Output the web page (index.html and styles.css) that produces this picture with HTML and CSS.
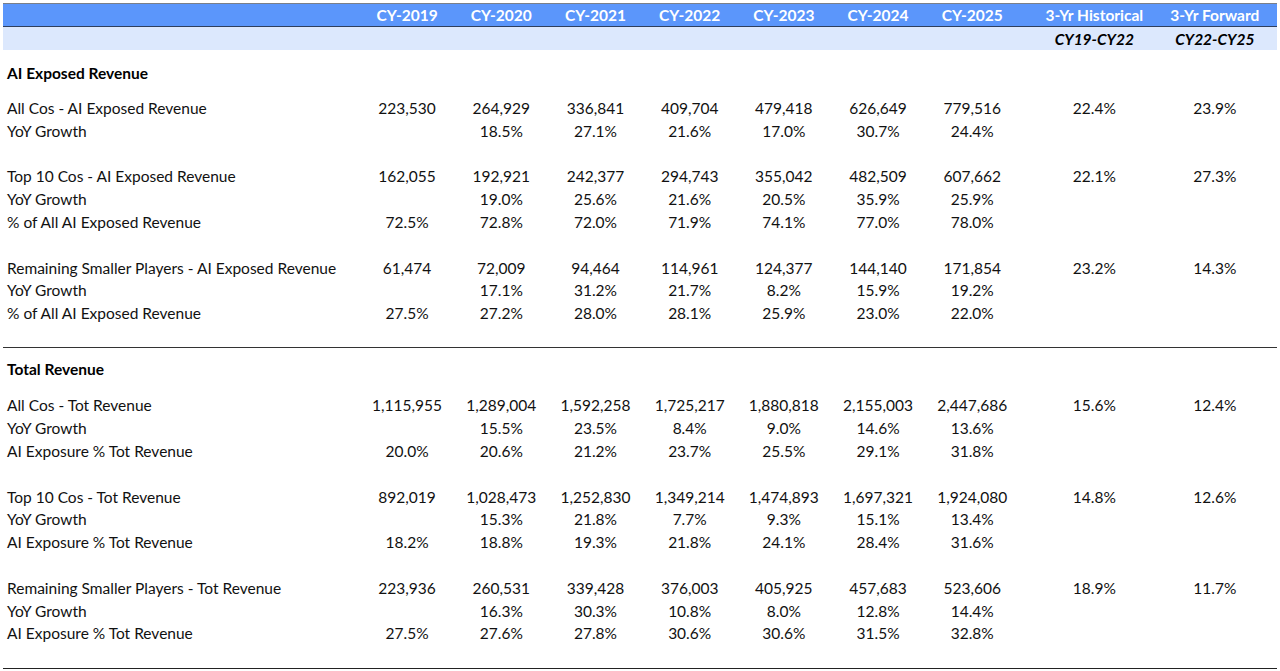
FILE: index.html
```html
<!DOCTYPE html>
<html>
<head>
<meta charset="utf-8">
<link rel="stylesheet" href="styles.css">
</head>
<body>
<div class="sheet">
  <div class="row head1">
    <div class="lbl"></div>
    <div>CY-2019</div><div>CY-2020</div><div>CY-2021</div><div>CY-2022</div><div>CY-2023</div><div>CY-2024</div><div>CY-2025</div>
    <div>3-Yr Historical</div><div>3-Yr Forward</div><div></div>
  </div>
  <div class="row head2">
    <div class="lbl"></div>
    <div></div><div></div><div></div><div></div><div></div><div></div><div></div>
    <div>CY19-CY22</div><div>CY22-CY25</div><div></div>
  </div>

  <div class="section">
    <div class="title">AI Exposed Revenue</div>
    <div class="row"><div class="lbl">All Cos - AI Exposed Revenue</div><div>223,530</div><div>264,929</div><div>336,841</div><div>409,704</div><div>479,418</div><div>626,649</div><div>779,516</div><div>22.4%</div><div>23.9%</div><div></div></div>
    <div class="row"><div class="lbl">YoY Growth</div><div></div><div>18.5%</div><div>27.1%</div><div>21.6%</div><div>17.0%</div><div>30.7%</div><div>24.4%</div><div></div><div></div><div></div></div>
    <div class="row blank"></div>
    <div class="row"><div class="lbl">Top 10 Cos - AI Exposed Revenue</div><div>162,055</div><div>192,921</div><div>242,377</div><div>294,743</div><div>355,042</div><div>482,509</div><div>607,662</div><div>22.1%</div><div>27.3%</div><div></div></div>
    <div class="row"><div class="lbl">YoY Growth</div><div></div><div>19.0%</div><div>25.6%</div><div>21.6%</div><div>20.5%</div><div>35.9%</div><div>25.9%</div><div></div><div></div><div></div></div>
    <div class="row"><div class="lbl">% of All AI Exposed Revenue</div><div>72.5%</div><div>72.8%</div><div>72.0%</div><div>71.9%</div><div>74.1%</div><div>77.0%</div><div>78.0%</div><div></div><div></div><div></div></div>
    <div class="row blank"></div>
    <div class="row"><div class="lbl">Remaining Smaller Players - AI Exposed Revenue</div><div>61,474</div><div>72,009</div><div>94,464</div><div>114,961</div><div>124,377</div><div>144,140</div><div>171,854</div><div>23.2%</div><div>14.3%</div><div></div></div>
    <div class="row"><div class="lbl">YoY Growth</div><div></div><div>17.1%</div><div>31.2%</div><div>21.7%</div><div>8.2%</div><div>15.9%</div><div>19.2%</div><div></div><div></div><div></div></div>
    <div class="row"><div class="lbl">% of All AI Exposed Revenue</div><div>27.5%</div><div>27.2%</div><div>28.0%</div><div>28.1%</div><div>25.9%</div><div>23.0%</div><div>22.0%</div><div></div><div></div><div></div></div>
    <div class="row blank"></div>
  </div>

  <div class="section ruled">
    <div class="title">Total Revenue</div>
    <div class="row"><div class="lbl">All Cos - Tot Revenue</div><div>1,115,955</div><div>1,289,004</div><div>1,592,258</div><div>1,725,217</div><div>1,880,818</div><div>2,155,003</div><div>2,447,686</div><div>15.6%</div><div>12.4%</div><div></div></div>
    <div class="row"><div class="lbl">YoY Growth</div><div></div><div>15.5%</div><div>23.5%</div><div>8.4%</div><div>9.0%</div><div>14.6%</div><div>13.6%</div><div></div><div></div><div></div></div>
    <div class="row"><div class="lbl">AI Exposure % Tot Revenue</div><div>20.0%</div><div>20.6%</div><div>21.2%</div><div>23.7%</div><div>25.5%</div><div>29.1%</div><div>31.8%</div><div></div><div></div><div></div></div>
    <div class="row blank"></div>
    <div class="row"><div class="lbl">Top 10 Cos - Tot Revenue</div><div>892,019</div><div>1,028,473</div><div>1,252,830</div><div>1,349,214</div><div>1,474,893</div><div>1,697,321</div><div>1,924,080</div><div>14.8%</div><div>12.6%</div><div></div></div>
    <div class="row"><div class="lbl">YoY Growth</div><div></div><div>15.3%</div><div>21.8%</div><div>7.7%</div><div>9.3%</div><div>15.1%</div><div>13.4%</div><div></div><div></div><div></div></div>
    <div class="row"><div class="lbl">AI Exposure % Tot Revenue</div><div>18.2%</div><div>18.8%</div><div>19.3%</div><div>21.8%</div><div>24.1%</div><div>28.4%</div><div>31.6%</div><div></div><div></div><div></div></div>
    <div class="row blank"></div>
    <div class="row"><div class="lbl">Remaining Smaller Players - Tot Revenue</div><div>223,936</div><div>260,531</div><div>339,428</div><div>376,003</div><div>405,925</div><div>457,683</div><div>523,606</div><div>18.9%</div><div>11.7%</div><div></div></div>
    <div class="row"><div class="lbl">YoY Growth</div><div></div><div>16.3%</div><div>30.3%</div><div>10.8%</div><div>8.0%</div><div>12.8%</div><div>14.4%</div><div></div><div></div><div></div></div>
    <div class="row"><div class="lbl">AI Exposure % Tot Revenue</div><div>27.5%</div><div>27.6%</div><div>27.8%</div><div>30.6%</div><div>30.6%</div><div>31.5%</div><div>32.8%</div><div></div><div></div><div></div></div>
    <div class="row blank"></div>
  </div>
  <div class="endrule"></div>
</div>
</body>
</html>
```

FILE: styles.css
```css
html, body {
  margin: 0;
  padding: 0;
  background: #ffffff;
}
body {
  font-family: Lato, "Open Sans", "Liberation Sans", sans-serif;
  font-size: 15.5px;
  color: #111111;
}
.sheet {
  margin: 3px 0 0 3px;
  width: 1274px;
}
.row {
  display: grid;
  grid-template-columns: 357px repeat(7, 94.2px) 150px 91px 1fr;
  height: 22.8px;
  align-items: center;
  text-align: center;
  white-space: nowrap;
}
.row .lbl {
  text-align: left;
  padding-left: 4px;
}
.head1 {
  height: 22px;
  background: #5b96fb;
  color: #ffffff;
  font-weight: 700;
  border-top: 1px solid #7a7f88;
  border-bottom: 1px solid #2e3f5e;
}
.head2 {
  height: 23px;
  background: #dce8fd;
  font-weight: 700;
  font-style: italic;
  color: #000000;
}
.title {
  height: 46.6px;
  box-sizing: border-box;
  padding: 12px 0 0 4px;
  line-height: 22px;
  font-weight: 700;
  color: #000000;
}
.ruled {
  border-top: 1px solid #333333;
}
.ruled .title {
  height: 45.6px;
  padding-top: 10px;
}
.endrule {
  border-top: 1px solid #222222;
}
```
